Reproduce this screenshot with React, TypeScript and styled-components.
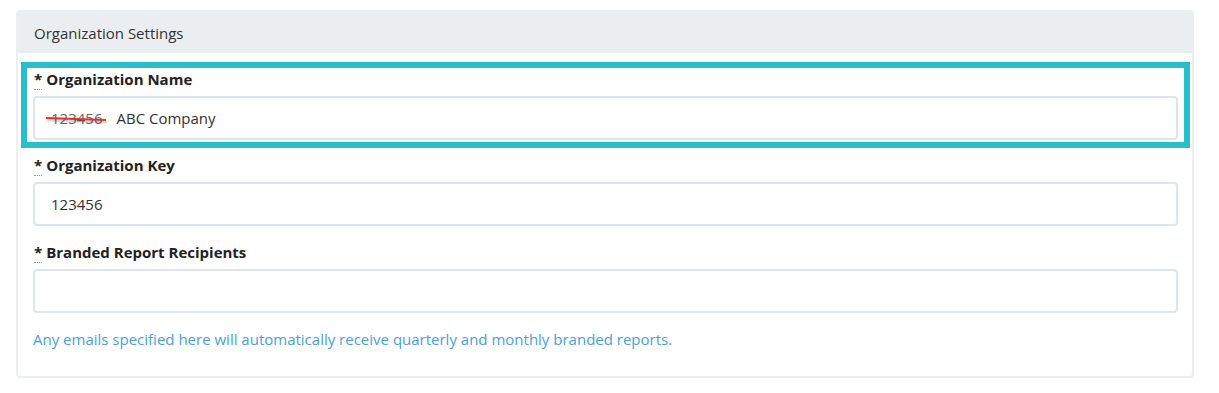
import { createGlobalStyle } from 'styled-components'
import styled from 'styled-components'

const GlobalStyle = createGlobalStyle`
  body {
    margin: 0;
    background: #fff;
    font-family: 'Open Sans', 'Noto Sans', sans-serif;
    color: #333;
  }
`

const Page = styled.div`
  padding: 10px 25px 16px 16px;
`

const Panel = styled.section`
  border: 2px solid #eceff1;
  border-radius: 4px;
  background: #fff;
`

const PanelHeader = styled.header`
  background: #ebeef0;
  height: 41px;
  display: flex;
  align-items: center;
  padding: 0 16px;
  font-size: 15px;
  color: #333;
`

const PanelBody = styled.div`
  padding: 9px 14px 27px 15px;
`

const Highlight = styled.div`
  margin: 0 -12px 7px;
  border: 6px solid #26bfca;
  padding: 1px 6px 2px;
`

const Field = styled.div`
  margin-bottom: 16px;
`

const Label = styled.label`
  display: block;
  font-size: 15px;
  font-weight: 700;
  line-height: 20px;
  color: #222;
  margin-bottom: 7px;
  padding-left: 1px;
`

const Required = styled.abbr`
  text-decoration: none;
  border-bottom: 1px dotted #999;
  margin-right: 4px;
`

const InputBox = styled.div`
  height: 40px;
  border: 2px solid #dfe5ec;
  border-radius: 4px;
  display: flex;
  align-items: center;
  padding: 0 16px;
  font-size: 15px;
  color: #333;
`

const Struck = styled.span`
  position: relative;
  color: #666;
  margin-right: 14px;

  &::after {
    content: '';
    position: absolute;
    left: -5px;
    right: -4px;
    top: 10px;
    height: 2px;
    background: #e4322b;
    transform: rotate(2deg);
    box-shadow: 1px 2px 2px rgba(0, 0, 0, 0.25);
  }
`

const Help = styled.p`
  margin: 0;
  font-size: 15px;
  line-height: 20px;
  color: #4a9fe0;
`

export default function App() {
  return (
    <>
      <GlobalStyle />
      <Page>
        <Panel>
          <PanelHeader>Organization Settings</PanelHeader>
          <PanelBody>
            <Highlight>
              <Label>
                <Required title="required">*</Required>Organization Name
              </Label>
              <InputBox>
                <Struck>123456</Struck>ABC Company
              </InputBox>
            </Highlight>
            <Field>
              <Label>
                <Required title="required">*</Required>Organization Key
              </Label>
              <InputBox>123456</InputBox>
            </Field>
            <Field>
              <Label>
                <Required title="required">*</Required>Branded Report Recipients
              </Label>
              <InputBox />
            </Field>
            <Help>Any emails specified here will automatically receive quarterly and monthly branded reports.</Help>
          </PanelBody>
        </Panel>
      </Page>
    </>
  )
}
